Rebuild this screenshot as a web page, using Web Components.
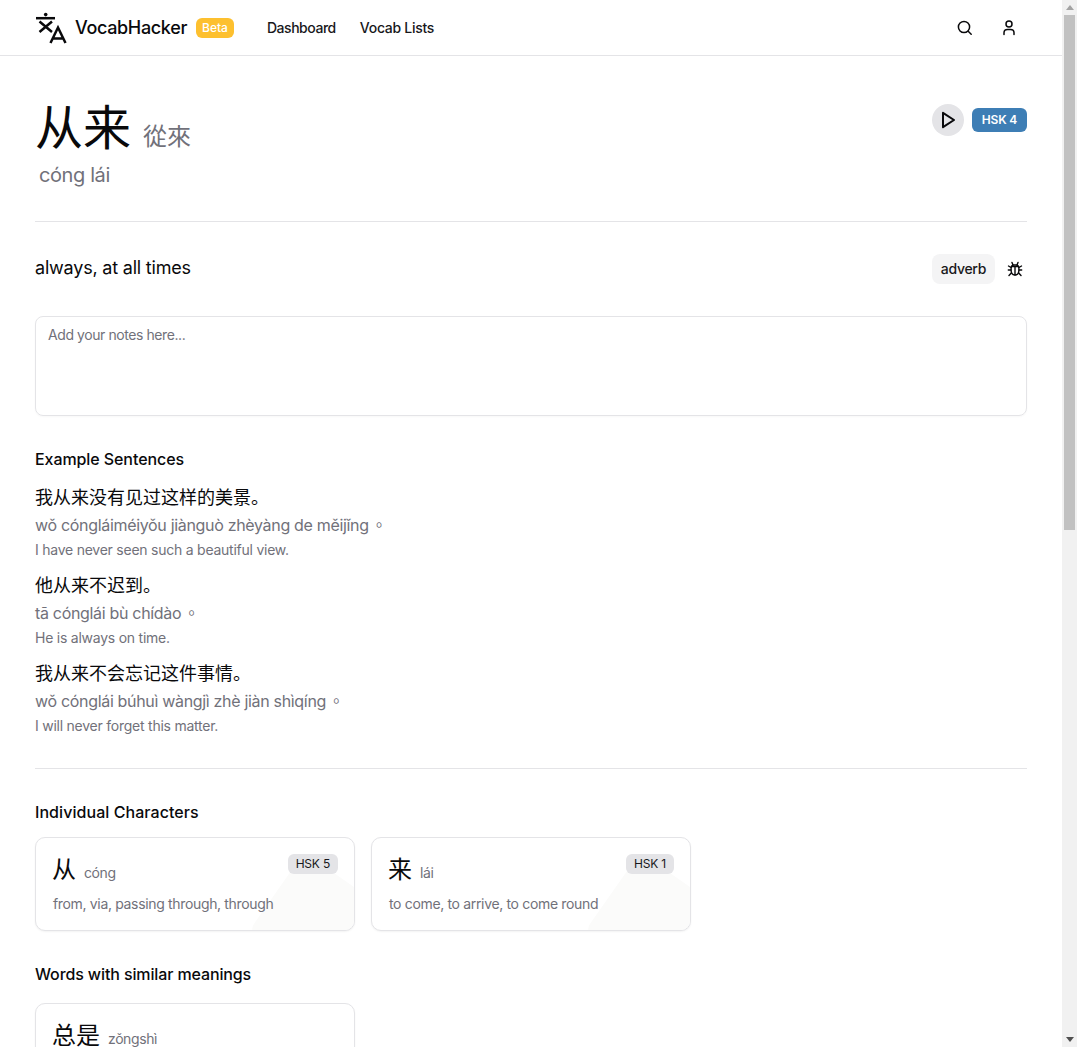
<!DOCTYPE html>
<html lang="en"><head><meta charset="utf-8"><title>VocabHacker</title>
<style>
html,body{margin:0;padding:0;background:#fff;height:100%;overflow:hidden}
body{font-family:Inter,"Noto Sans CJK SC",sans-serif;color:#09090b;display:flex}
main{flex:1;min-width:0;height:100vh;overflow:hidden}
</style></head><body>
<main>
<vh-header></vh-header>
<vh-page>
  <vh-word></vh-word>
  <vh-meaning></vh-meaning>
  <vh-notes></vh-notes>
  <vh-section title="Example Sentences" style="margin-top:33px;--ls:-.08px">
    <vh-sentence zh="我从来没有见过这样的美景。" py="wǒ cóngláiméiyǒu jiànguò zhèyàng de měijǐng 。" en="I have never seen such a beautiful view."></vh-sentence>
    <vh-sentence zh="他从来不迟到。" py="tā cónglái bù chídào 。" en="He is always on time."></vh-sentence>
    <vh-sentence zh="我从来不会忘记这件事情。" py="wǒ cónglái búhuì wàngjì zhè jiàn shìqíng 。" en="I will never forget this matter."></vh-sentence>
  </vh-section>
  <vh-divider></vh-divider>
  <vh-section title="Individual Characters" style="margin-top:33px;--ls:.06px">
    <vh-grid>
      <vh-card zh="从" py="cóng" level="HSK 5" def="from, via, passing through, through"></vh-card>
      <vh-card zh="来" py="lái" level="HSK 1" def="to come, to arrive, to come round"></vh-card>
    </vh-grid>
  </vh-section>
  <vh-section title="Words with similar meanings" style="margin-top:33px;--ls:-.12px">
    <vh-grid style="margin-top:19px">
      <vh-card zh="总是" py="zǒngshì"></vh-card>
    </vh-grid>
  </vh-section>
</vh-page>
</main>
<vh-scrollbar></vh-scrollbar>
<script>
const CJK='Inter,"Noto Sans CJK SC",sans-serif';
function def(name,css,html){
  customElements.define(name,class extends HTMLElement{
    connectedCallback(){
      if(this.shadowRoot)return;
      const s=this.attachShadow({mode:'open'});
      const a=n=>this.getAttribute(n)||'';
      s.innerHTML='<style>'+css+'</style>'+(typeof html==='function'?html(a):html);
    }
  });
}
def('vh-scrollbar',`
:host{display:flex;flex-direction:column;flex:none;width:15px;height:100vh;background:#f1f1f1}
.b{height:15px;flex:none;display:flex;align-items:center;justify-content:center}
.u{width:0;height:0;border-left:4px solid transparent;border-right:4px solid transparent;border-bottom:5px solid #a3a3a3}
.d{width:0;height:0;border-left:4px solid transparent;border-right:4px solid transparent;border-top:5px solid #505050}
.track{flex:1}
.thumb{height:515px;margin:0 2px;background:#c1c1c1}
`,`<div class="b"><div class="u"></div></div><div class="track"><div class="thumb"></div></div><div class="b"><div class="d"></div></div>`);
def('vh-header',`
:host{display:block;height:55px;border-bottom:1px solid #e4e4e7;background:#fff}
.in{max-width:992px;margin:0 auto;height:55px;display:flex;align-items:center}
.logo{width:32px;height:32px;display:block;margin-right:8px;flex:none}
.name{font-size:18px;line-height:28px;font-weight:500;letter-spacing:-.34px;color:#09090b}
.beta{background:#fdc02f;color:#fff;font-size:12px;font-weight:500;line-height:18px;padding:1px 6px;border-radius:6px;margin-left:9px}
nav{display:flex;gap:24px;margin-left:33px;font-size:14px;line-height:20px;font-weight:500;letter-spacing:-.46px;color:#18181b}
nav span+span{letter-spacing:-.28px}
.r{margin-left:auto;display:flex;gap:28px;padding-right:10px;align-items:center}
svg.i{width:16px;height:16px;display:block;fill:none;stroke:#09090b;stroke-width:1.5;stroke-linecap:round;stroke-linejoin:round}
`,`<div class="in">
<svg class="logo" viewBox="0 0 32 32" fill="none" stroke="#09090b" stroke-width="2.5"><path d="M1 6.2h19"/><circle cx="10.7" cy="2.6" r="1.8" fill="#09090b" stroke="none"/><path d="M4.5 9.5 17 20M17 9.5 4.5 20"/><path d="M15.5 31 23 15.5 30.5 31M18 26.5h10"/></svg>
<span class="name">VocabHacker</span><span class="beta">Beta</span>
<nav><span>Dashboard</span><span>Vocab Lists</span></nav>
<div class="r">
<svg class="i" viewBox="0 0 16 16"><circle cx="7" cy="7" r="5.6"/><path d="m11.2 11.2 3 3"/></svg>
<svg class="i" viewBox="0 0 16 16"><circle cx="8" cy="4" r="3"/><path d="M3 14.4v-1.6C3 10.8 4.5 9.6 6.5 9.6h3c2 0 3.5 1.2 3.5 3.2v1.6"/></svg>
</div></div>`);
def('vh-page',`:host{display:block;max-width:992px;margin:0 auto}`,`<slot></slot>`);
def('vh-word',`
:host{display:flex;justify-content:space-between;padding:40px 0 32px;border-bottom:1px solid #e4e4e7;font-family:${CJK}}
.zh{display:flex;align-items:flex-end}
.big{font-size:48px;line-height:64px;color:#09090b}
.tr{font-size:24px;line-height:32px;color:#71717a;margin-left:12px;padding-bottom:7px}
.py{font-size:20px;line-height:28px;letter-spacing:-.4px;color:#71717a;padding-left:4px;margin-top:1px}
.right{display:flex;gap:8px;align-items:flex-start;padding-top:8px}
.play{width:32px;height:32px;border-radius:50%;background:#e4e4e7;display:flex;align-items:center;justify-content:center}
.hsk{background:#3e7eb5;color:#fff;font-size:12px;line-height:16px;font-weight:600;letter-spacing:-.2px;padding:4px 10px;border-radius:6px;margin-top:4px}
`,`<div><div class="zh"><span class="big">从来</span><span class="tr">從來</span></div><div class="py">cóng lái</div></div>
<div class="right"><div class="play"><svg width="20" height="20" viewBox="0 0 20 20" fill="none" stroke="#09090b" stroke-width="2" stroke-linejoin="round"><path d="M5 2.8 16 10 5 17.2Z"/></svg></div><div class="hsk">HSK 4</div></div>`);
def('vh-meaning',`
:host{display:flex;justify-content:space-between;align-items:center;margin-top:32px;font-size:18px;line-height:28px;letter-spacing:-.2px}
.t{padding-bottom:2px}
.r{display:flex;align-items:center;gap:12px;padding-right:4px}
.pos{background:#f4f4f5;border-radius:8px;font-size:14px;line-height:20px;font-weight:500;letter-spacing:-.3px;padding:5px 9px;color:#18181b}
`,`<span class="t">always, at all times</span><div class="r"><span class="pos">adverb</span>
<svg width="16" height="16" viewBox="0 0 16 16" fill="none" stroke="#09090b" stroke-width="1.4" stroke-linecap="round"><path d="M5 1.5l1 2.5M11 1.5l-1 2.5M4.5 5.5h7M4 6.5 1.5 5M12 6.5 14.5 5M4 9H1.3M12 9h2.7M4.3 12 2 14.5M11.7 12 14 14.5"/><path d="M5.8 4h4.4l1.3 1.5c.6 1.4.7 5.2-.3 6.8-.6 1-1.6 1.7-3.2 1.7s-2.6-.7-3.2-1.7c-1-1.6-.9-5.4-.3-6.8z"/><path d="M8 6v8"/></svg></div>`);
def('vh-notes',`
:host{display:block;margin-top:32px;height:100px;box-sizing:border-box;border:1px solid #e4e4e7;border-radius:8px;padding:8px 12px;font-size:14px;line-height:20px;letter-spacing:-.42px;color:#71717a;box-shadow:0 1px 2px rgba(0,0,0,.03)}
`,`Add your notes here...`);
def('vh-section',`
:host{display:block}
h2{margin:0 0 15px;font-size:16px;line-height:20px;font-weight:500;letter-spacing:var(--ls,0);color:#09090b}
`,a=>`<h2>${a('title')}</h2><slot></slot>`);
def('vh-sentence',`
:host{display:block;margin-bottom:12px;font-family:${CJK}}
.z{font-size:18px;line-height:28px;color:#09090b}
.p{font-family:Inter,"Noto Sans CJK TC",sans-serif;font-size:16px;line-height:24px;letter-spacing:-.32px;color:#71717a;margin-top:1px}
.p i{font-style:normal;margin-left:-2px}
.e{font-size:14px;line-height:20px;letter-spacing:-.24px;color:#71717a;margin-top:3px}
`,a=>`<div class="z">${a('zh')}</div><div class="p" lang="zh-Hant">${a('py').replace('。','<i>。</i>')}</div><div class="e">${a('en')}</div>`);
def('vh-divider',`:host{display:block;margin-top:32px;border-top:1px solid #e4e4e7}`,``);
def('vh-grid',`:host{display:grid;grid-template-columns:repeat(3,320px);gap:16px}`,`<slot></slot>`);
def('vh-card',`
:host{display:block;position:relative;overflow:hidden;height:94px;box-sizing:border-box;border:1px solid #e4e4e7;border-radius:10px;box-shadow:0 1px 2px rgba(0,0,0,.05);padding:16px 17px;font-family:${CJK};background:#fff}
.deco{position:absolute;right:-10px;bottom:-37px;width:96px;height:96px;background:#fbfbfa;transform:rotate(35deg);border-radius:8px}
.t{display:flex;align-items:flex-end;position:relative}
.z{font-size:24px;line-height:32px;color:#09090b;margin-left:-1px}
.p{font-size:14px;line-height:20px;letter-spacing:-.4px;color:#71717a;margin-left:8px;padding-bottom:3px}
.d{font-size:14px;line-height:20px;letter-spacing:-.34px;color:#71717a;margin-top:8px;position:relative;white-space:nowrap}
.l{position:absolute;right:16px;top:16px;background:#e4e4e7;border-radius:6px;font-size:12px;line-height:16px;font-weight:400;letter-spacing:-.2px;padding:2px 8px;color:#18181b}
`,a=>`${a('level')?'<div class="deco"></div>':''}<div class="t"><span class="z">${a('zh')}</span><span class="p">${a('py')}</span></div>${a('def')?`<div class="d">${a('def')}</div>`:''}${a('level')?`<span class="l">${a('level')}</span>`:''}`);
</script>
</body></html>
